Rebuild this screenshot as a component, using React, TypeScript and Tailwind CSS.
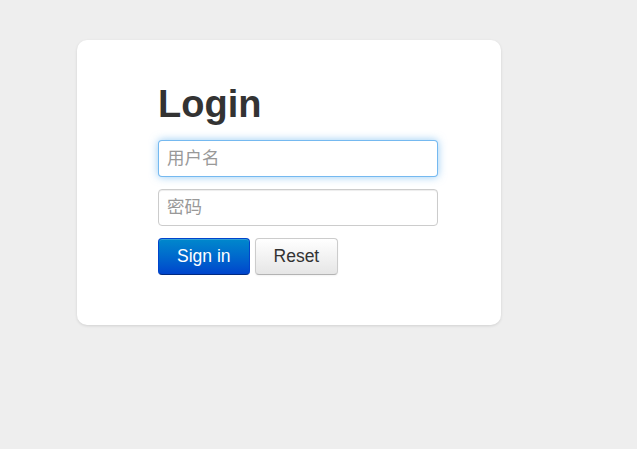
export default function App() {
  return (
    <div className="min-h-[449px] bg-[#eeeeee] pt-[40px] pl-[77px] font-['Liberation_Sans','Noto_Sans_CJK_SC',sans-serif]">
      {/* 登录卡片 */}
      <div className="w-[424px] h-[285px] bg-white rounded-[10px] shadow-[0_1px_3px_rgba(0,0,0,0.12)] pt-[44px] pl-[81px]">
        <h1 className="text-[38px] leading-[40px] font-bold text-[#333333] mb-[16px]">Login</h1>
        <form className="w-[280px]" onSubmit={(e) => e.preventDefault()}>
          <input
            type="text"
            placeholder="用户名"
            autoFocus
            className="block w-full h-[37px] px-[8px] mb-[12px] text-[17.5px] text-[#555555] placeholder:text-[#999999] bg-white rounded-[4px] border border-[rgba(82,168,236,0.8)] shadow-[0_0_8px_rgba(82,168,236,0.6)] outline-none font-['Liberation_Sans','Noto_Sans_CJK_SC',sans-serif]"
          />
          <input
            type="password"
            placeholder="密码"
            className="block w-full h-[37px] px-[8px] mb-[12px] text-[17.5px] text-[#555555] placeholder:text-[#999999] bg-white rounded-[4px] border border-[#cccccc] shadow-[inset_0_1px_1px_rgba(0,0,0,0.075)] outline-none font-['Liberation_Sans','Noto_Sans_CJK_SC',sans-serif]"
          />
          <div className="flex gap-[5px]">
            <button
              type="submit"
              className="h-[37px] px-[18px] text-[17.5px] text-white rounded-[4px] border border-[#0044cc] border-b-[#002a80] bg-gradient-to-b from-[#0088cc] to-[#0044cc] shadow-[inset_0_1px_0_rgba(255,255,255,0.2)]"
            >
              Sign in
            </button>
            <button
              type="reset"
              className="h-[37px] px-[18px] text-[17.5px] text-[#333333] rounded-[4px] border border-[#cccccc] border-b-[#b3b3b3] bg-gradient-to-b from-white to-[#e6e6e6] shadow-[inset_0_1px_0_rgba(255,255,255,0.2),0_1px_2px_rgba(0,0,0,0.05)]"
            >
              Reset
            </button>
          </div>
        </form>
      </div>
    </div>
  );
}
